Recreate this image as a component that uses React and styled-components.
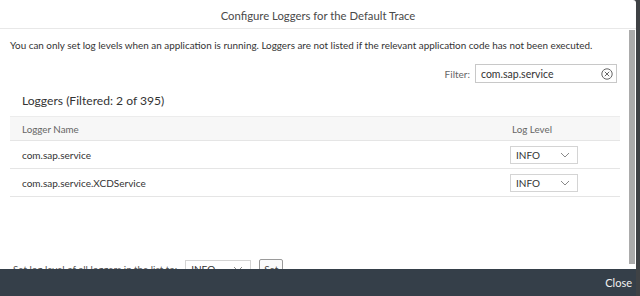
import React from "react";
import styled, { createGlobalStyle } from "styled-components";

const Global = createGlobalStyle`
  html, body { margin: 0; padding: 0; }
  body {
    background: #3f4245;
    font-family: Lato, "Noto Sans", "Liberation Sans", sans-serif;
    width: 640px;
    height: 296px;
    overflow: hidden;
  }
`;

const Dialog = styled.div`
  width: 636px;
  height: 296px;
  background: #fff;
  display: flex;
  flex-direction: column;
  border-top-right-radius: 3px;
  overflow: hidden;
`;

const Header = styled.div`
  height: 29px;
  flex: none;
  display: flex;
  align-items: center;
  justify-content: center;
  border-bottom: 1px solid #e8e8e8;
  font-size: 11.3px;
  color: #4a4a4a;
  padding-top: 2px;
  box-sizing: border-box;
`;

const Body = styled.div`
  flex: 1;
  min-height: 0;
  position: relative;
  overflow: hidden;
`;

const ScrollThumb = styled.div`
  position: absolute;
  top: 1px;
  bottom: 5px;
  right: 1px;
  width: 6px;
  background: #ababab;
`;

const Content = styled.div`
  padding: 10px 7px 8px 10px;
  display: flex;
  flex-direction: column;
`;

const Info = styled.p`
  margin: 0;
  font-size: 9.9px;
  line-height: 13px;
  color: #333;
`;

const FilterRow = styled.div`
  display: flex;
  justify-content: flex-end;
  align-items: center;
  gap: 5px;
  margin-top: 12px;
  padding-right: 12px;
`;

const Label = styled.span`
  font-size: 10px;
  color: #666;
`;

const InputBox = styled.div`
  width: 142px;
  height: 19px;
  box-sizing: border-box;
  border: 1px solid #c8c8c8;
  display: flex;
  align-items: center;
  justify-content: space-between;
  padding: 0 3px 0 5px;
  font-size: 10.5px;
  color: #333;
`;

const Heading = styled.h2`
  margin: 9px 0 0 12px;
  font-size: 12.1px;
  font-weight: 400;
  color: #333;
  line-height: 17px;
`;

const Table = styled.div`
  margin-top: 7px;
  margin-right: 9px;
  display: flex;
  flex-direction: column;
`;

const Row = styled.div`
  display: grid;
  grid-template-columns: 1fr 110px;
  align-items: center;
  height: ${(p) => (p.$head ? "25px" : "28px")};
  box-sizing: border-box;
  background: ${(p) => (p.$head ? "#f7f7f7" : "#fff")};
  border-bottom: 1px solid #e5e5e5;
  border-top: ${(p) => (p.$head ? "1px solid #ececec" : "none")};
  padding-left: 12px;
  font-size: ${(p) => (p.$head ? "9.8px" : "10px")};
  color: ${(p) => (p.$head ? "#666" : "#333")};
`;

const HeadCell = styled.span`
  padding-left: ${(p) => p.$indent || 0}px;
`;

const Select = styled.div`
  width: ${(p) => p.$w || 68}px;
  height: 18px;
  box-sizing: border-box;
  border: 1px solid #d4d4d4;
  display: flex;
  align-items: center;
  justify-content: space-between;
  padding: 0 7px 0 5px;
  font-size: 10px;
  color: #333;
  background: #fff;
`;

const BottomRow = styled.div`
  display: flex;
  align-items: center;
  gap: 8px;
  margin-top: 62px;
  padding-left: 3px;
  font-size: 9.8px;
  color: #555;
`;

const SetButton = styled.button`
  height: 20px;
  padding: 0 4px;
  border: 1px solid #9a9a9a;
  border-radius: 2px;
  background: #fafafa;
  font-family: inherit;
  font-size: 10px;
  color: #444;
`;

const Footer = styled.div`
  height: 27px;
  flex: none;
  background: #353f49;
  display: flex;
  align-items: center;
  justify-content: flex-end;
  padding-right: 4px;
  font-size: 11px;
  color: #f2f2f2;
`;

const Chevron = () => (
  <svg width="10" height="6" viewBox="0 0 10 6">
    <path d="M1 1l4 4 4-4" fill="none" stroke="#8a8a8a" strokeWidth="1" />
  </svg>
);

const ClearIcon = () => (
  <svg width="12" height="12" viewBox="0 0 12 12">
    <circle cx="6" cy="6" r="5.2" fill="none" stroke="#666" strokeWidth="1" />
    <path d="M3.8 3.8l4.4 4.4M8.2 3.8l-4.4 4.4" stroke="#666" strokeWidth="1" />
  </svg>
);

const loggers = ["com.sap.service", "com.sap.service.XCDService"];

export default function App() {
  return (
    <>
      <Global />
      <Dialog>
        <Header>Configure Loggers for the Default Trace</Header>
        <Body>
          <Content>
            <Info>
              You can only set log levels when an application is running. Loggers are not listed if the relevant application code has not been executed.
            </Info>
            <FilterRow>
              <Label>Filter:</Label>
              <InputBox>
                com.sap.service
                <ClearIcon />
              </InputBox>
            </FilterRow>
            <Heading>Loggers (Filtered: 2 of 395)</Heading>
            <Table>
              <Row $head>
                <HeadCell>Logger Name</HeadCell>
                <HeadCell $indent={2}>Log Level</HeadCell>
              </Row>
              {loggers.map((l) => (
                <Row key={l}>
                  <span>{l}</span>
                  <Select>
                    INFO
                    <Chevron />
                  </Select>
                </Row>
              ))}
            </Table>
            <BottomRow>
              <span>Set log level of all loggers in the list to:</span>
              <Select $w={66}>
                INFO
                <Chevron />
              </Select>
              <SetButton>Set</SetButton>
            </BottomRow>
          </Content>
          <ScrollThumb />
        </Body>
        <Footer>Close</Footer>
      </Dialog>
    </>
  );
}
